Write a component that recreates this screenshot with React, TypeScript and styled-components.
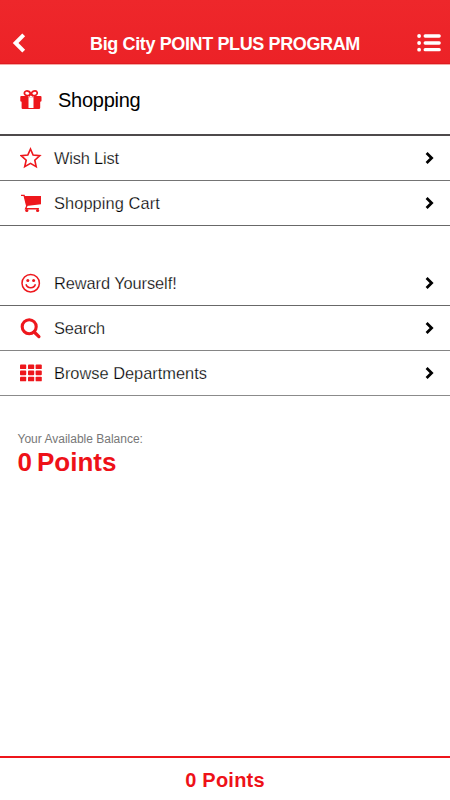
import React from "react";
import styled, { createGlobalStyle } from "styled-components";

const GlobalStyle = createGlobalStyle`
  * { box-sizing: border-box; }
  body { margin: 0; background: #fff; }
  svg { display: block; }
`;

const Screen = styled.div`
  width: 100%;
  height: 100vh;
  min-height: 800px;
  display: flex;
  flex-direction: column;
  overflow: hidden;
  background: #fff;
  color: #000;
  font-family: "Liberation Sans", Arial, sans-serif;
  white-space: nowrap;
`;

const Header = styled.header`
  height: 65px;
  flex: none;
  padding: 21px 8px 0 11px;
  display: grid;
  grid-template-columns: 26px 1fr 26px;
  align-items: center;
  background: linear-gradient(#ee272b, #ec2227);
  border-bottom: 1px solid #f5a9a5;
  box-shadow: inset 0 -1px #df1b20;
  color: #fff;
`;

const Title = styled.h1`
  margin: 3px 3px 0 0;
  text-align: center;
  font-size: 18px;
  line-height: 22px;
  font-weight: 700;
  letter-spacing: -0.38px;
`;

const IconButton = styled.button`
  border: 0;
  padding: 0;
  background: none;
  color: inherit;
`;

const SectionHeading = styled.div`
  height: 71px;
  flex: none;
  display: flex;
  align-items: center;
  padding-left: 20px;
  border-bottom: 2px solid #4d4a4b;
`;

const SectionTitle = styled.h2`
  margin: 0 0 0 16px;
  font-size: 20px;
  line-height: 24px;
  font-weight: 400;
  letter-spacing: -0.27px;
`;

const Menu = styled.nav<{ $gap?: number }>`
  flex: none;
  margin-top: ${(p) => p.$gap ?? 0}px;
`;

const Row = styled.a<{ $height: number; $line: string }>`
  height: ${(p) => p.$height}px;
  display: flex;
  align-items: center;
  padding: 0 16px 0 20px;
  border-bottom: 1px solid ${(p) => p.$line};
`;

const Label = styled.span<{ $tracking: number }>`
  flex: 1;
  margin-left: 12px;
  font-size: 16.4px;
  line-height: 20px;
  letter-spacing: ${(p) => p.$tracking}px;
  -webkit-text-stroke: 0.25px #fff;
`;

const Balance = styled.section`
  flex: 1;
  padding: 36px 0 0 17.5px;
`;

const Caption = styled.div`
  font-size: 12px;
  line-height: 14px;
  color: #777;
`;

const Amount = styled.div`
  margin-top: 1px;
  font-size: 26px;
  line-height: 30px;
  font-weight: 700;
  word-spacing: -2.2px;
  color: #ee1118;
`;

const Footer = styled.footer`
  height: 44px;
  flex: none;
  padding-top: 1px;
  display: flex;
  align-items: center;
  justify-content: center;
  border-top: 2px solid #ee151b;
  font-size: 20px;
  line-height: 24px;
  font-weight: 700;
  letter-spacing: 0.24px;
  color: #ee1118;
`;

const RED = "#ee171c";

const BackIcon = () => (
  <svg width="15" height="20" viewBox="0 0 15 20">
    <path d="M12.7 1.9 4.6 10l8.1 8.1" fill="none" stroke="#fff" strokeWidth="4" />
  </svg>
);

const ListIcon = () => (
  <svg width="26" height="20" viewBox="0 0 26 20" stroke="#fff" strokeLinecap="round">
    <path d="M9.2 3h14M9.2 10h14M9.2 16.7h14" strokeWidth="3.3" />
    <path d="M3.1 3h.01M3.1 10h.01M3.1 16.7h.01" strokeWidth="3.8" />
  </svg>
);

const GiftIcon = () => (
  <svg width="22" height="22" viewBox="0 0 22 22">
    <g fill="none" stroke={RED} strokeWidth="1.7">
      <ellipse cx="7.3" cy="4.3" rx="2.9" ry="2.3" transform="rotate(15 7.3 4.3)" />
      <ellipse cx="14.4" cy="4.3" rx="2.9" ry="2.3" transform="rotate(-15 14.4 4.3)" />
      <path d="m8.8 7.3 2.1-2.4L13 7.3" />
    </g>
    <path d="M1.2 7h6.7v1h5.8V7h6.8q1 0 1 1v3.8q0 1-1.3 1v6q0 1.2-1.3 1.2H2.7q-1.1 0-1.1-1.2v-6Q.3 12.8.3 11.8V8q0-1 .9-1Z" fill={RED} />
    <path d="M8.5 8.2h5V19h-5z" fill="#fff" />
  </svg>
);

const StarIcon = () => (
  <svg width="22" height="22" viewBox="0 0 22 22">
    <path d="m10.5 2 2.6 6.1 6.7.6-5 4.5 1.4 6.5-5.7-3.3-5.8 3.3 1.5-6.5-5-4.5 6.6-.6Z" fill="none" stroke={RED} strokeWidth="1.6" />
  </svg>
);

const CartIcon = () => (
  <svg width="22" height="22" viewBox="0 0 22 22">
    <path d="M4.4 4H21v8.2L6.5 14Z" fill={RED} />
    <path d="M1 3.4h3.1l2.7 10.6-1.2 2.8h13.3" fill="none" stroke={RED} strokeWidth="1.4" />
    <circle cx="6.8" cy="18.5" r="1.6" fill={RED} />
    <circle cx="17.6" cy="18.5" r="1.6" fill={RED} />
  </svg>
);

const SmileIcon = () => (
  <svg width="22" height="22" viewBox="0 0 22 22">
    <circle cx="10.7" cy="11.2" r="8.7" fill="none" stroke={RED} strokeWidth="1.5" />
    <circle cx="7.8" cy="8.5" r="1.5" fill={RED} />
    <circle cx="13.6" cy="8.5" r="1.5" fill={RED} />
    <path d="M6 12.3c1.1 4.5 8.3 4.5 9.4 0" fill="none" stroke={RED} strokeWidth="1.5" />
  </svg>
);

const SearchIcon = () => (
  <svg width="22" height="22" viewBox="0 0 22 22" fill="none" stroke={RED}>
    <circle cx="9.2" cy="9.7" r="7" strokeWidth="3.1" />
    <path d="m14.2 15 4.7 4.6" strokeWidth="3.3" strokeLinecap="round" />
  </svg>
);

const GridIcon = () => (
  <svg width="22" height="22" viewBox="0 0 22 22" fill={RED}>
    {[2.5, 8.6, 14.7].map((y) =>
      [0, 8, 15.6].map((x) => <rect key={`${x}-${y}`} x={x} y={y} width="6.2" height="4.6" rx="0.9" />)
    )}
  </svg>
);

const Chevron = () => (
  <svg width="9" height="14" viewBox="0 0 9 14">
    <path d="m1.6 1.9 5 5-5 5" fill="none" stroke="#000" strokeWidth="2.8" />
  </svg>
);

type Item = { label: string; icon: React.ReactNode; height: number; tracking: number; line: string };

const saved: Item[] = [
  { label: "Wish List", icon: <StarIcon />, height: 45, tracking: -0.18, line: "#747474" },
  { label: "Shopping Cart", icon: <CartIcon />, height: 45, tracking: 0.08, line: "#686868" },
];

const explore: Item[] = [
  { label: "Reward Yourself!", icon: <SmileIcon />, height: 45, tracking: -0.08, line: "#686868" },
  { label: "Search", icon: <SearchIcon />, height: 45, tracking: -0.15, line: "#858585" },
  { label: "Browse Departments", icon: <GridIcon />, height: 45, tracking: -0.01, line: "#8b8b8b" },
];

const MenuList = ({ items, gap }: { items: Item[]; gap?: number }) => (
  <Menu $gap={gap}>
    {items.map((item) => (
      <Row key={item.label} $height={item.height} $line={item.line}>
        {item.icon}
        <Label $tracking={item.tracking}>{item.label}</Label>
        <Chevron />
      </Row>
    ))}
  </Menu>
);

export default function App() {
  return (
    <>
      <GlobalStyle />
      <Screen>
        <Header>
          <IconButton aria-label="Back"><BackIcon /></IconButton>
          <Title>Big City POINT PLUS PROGRAM</Title>
          <IconButton aria-label="Menu"><ListIcon /></IconButton>
        </Header>
        <SectionHeading>
          <GiftIcon />
          <SectionTitle>Shopping</SectionTitle>
        </SectionHeading>
        <MenuList items={saved} />
        <MenuList items={explore} gap={35} />
        <Balance>
          <Caption>Your Available Balance:</Caption>
          <Amount>0 Points</Amount>
        </Balance>
        <Footer>0 Points</Footer>
      </Screen>
    </>
  );
}
